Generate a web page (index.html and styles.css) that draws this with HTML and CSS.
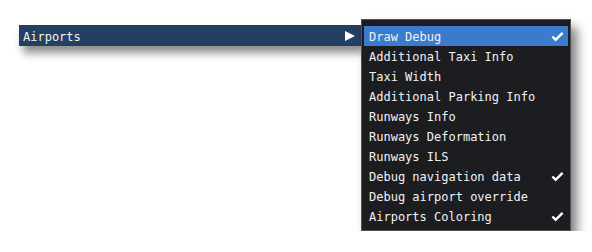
FILE: index.html
```html
<!DOCTYPE html>
<html lang="en">
<head>
    <meta charset="UTF-8">
    <title>Airports menu</title>
    <link rel="stylesheet" href="styles.css">
</head>
<body>
    <div class="stage">
        <div class="parent-item">
            <span>Airports</span>
            <span class="arrow"></span>
        </div>

        <!-- Submenu -->
        <ul class="submenu">
            <li class="active">Draw Debug
                <svg class="check" viewBox="0 0 14 11"><path d="M1.5 5.5 L5 9 L12.5 1.5"/></svg>
            </li>
            <li>Additional Taxi Info</li>
            <li>Taxi Width</li>
            <li>Additional Parking Info</li>
            <li>Runways Info</li>
            <li>Runways Deformation</li>
            <li>Runways ILS</li>
            <li>Debug navigation data
                <svg class="check" viewBox="0 0 14 11"><path d="M1.5 5.5 L5 9 L12.5 1.5"/></svg>
            </li>
            <li>Debug airport override</li>
            <li>Airports Coloring
                <svg class="check" viewBox="0 0 14 11"><path d="M1.5 5.5 L5 9 L12.5 1.5"/></svg>
            </li>
        </ul>
    </div>
</body>
</html>
```

FILE: styles.css
```css
body {
    margin: 0;
    background: #fff;
    font-family: "DejaVu Sans Mono", "Liberation Mono", monospace;
    font-size: 12px;
    color: #f2f2f2;
}
.stage {
    display: flex;
    align-items: flex-start;
    padding: 19px 0 0 19px;
}
.parent-item {
    margin-top: 6px;
    width: 342px;
    height: 21px;
    box-sizing: border-box;
    padding: 2px 6px 0 4px;
    background: #233f61;
    display: flex;
    align-items: center;
    justify-content: space-between;
    box-shadow: 4px 7px 8px rgba(0, 0, 0, 0.45);
}
.arrow {
    width: 0;
    height: 0;
    border-top: 5px solid transparent;
    border-bottom: 5px solid transparent;
    border-left: 10px solid #fff;
    margin-top: -2px;
}
.submenu {
    list-style: none;
    margin: 0;
    width: 210px;
    box-sizing: border-box;
    padding: 6px 2px 4px 2px;
    background: #1c1d21;
    border: 1px solid #505257;
    box-shadow: 6px 8px 10px rgba(0, 0, 0, 0.5);
    position: relative;
    z-index: 1;
}
.submenu li {
    height: 20px;
    box-sizing: border-box;
    padding: 2px 4px 0 5px;
    display: flex;
    align-items: center;
    justify-content: space-between;
}
.submenu li.active {
    background: #3a7bcd;
}
.check {
    width: 13px;
    height: 11px;
    margin-top: -2px;
    fill: none;
    stroke: #fff;
    stroke-width: 2.6;
}
```
